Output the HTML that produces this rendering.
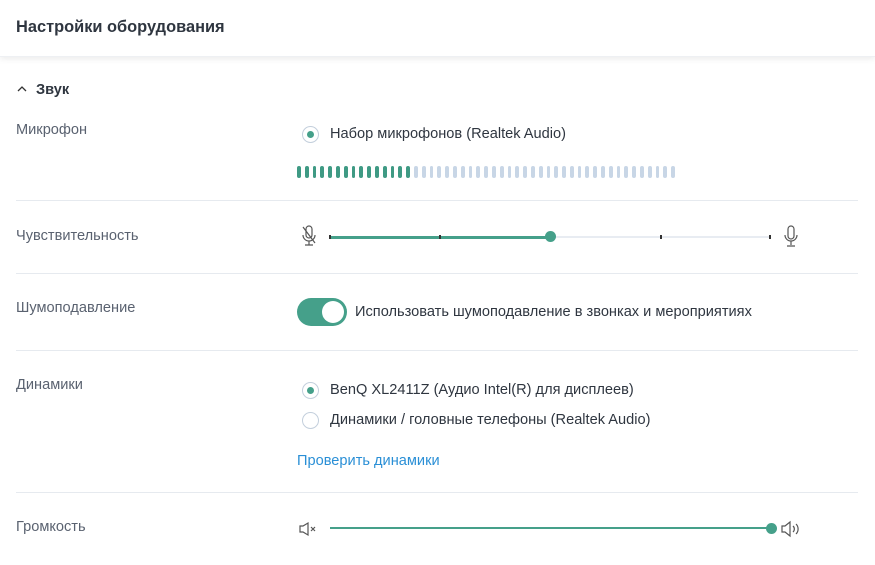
<!DOCTYPE html>
<html><head><meta charset="utf-8"><style>
*{margin:0;padding:0;box-sizing:border-box}
body{width:875px;height:565px;background:#fff;font-family:"Liberation Sans","DejaVu Sans",sans-serif;color:#333;position:relative;overflow:hidden}
.hdr{position:absolute;left:0;top:0;width:875px;height:57px;background:#fff;box-shadow:0 2px 6px rgba(0,0,0,.08);border-bottom:1px solid #eef0f3}
.hdr span{position:absolute;left:16px;top:18px;font-size:16.4px;font-weight:bold;color:#2f3640}
.a{position:absolute;white-space:nowrap}
.lbl{font-size:14.6px;color:#5a6270}
.t{font-size:14.6px;color:#2f3640}
.sep{position:absolute;left:16px;width:842px;height:1px;background:#e6eaef}
.radio{position:absolute;width:17px;height:17px;border-radius:50%;border:1px solid #c3cfdc;background:#fff}
.radio.on::after{content:"";position:absolute;left:4px;top:4px;width:7px;height:7px;border-radius:50%;background:#45a08a}
.bars{position:absolute;left:297px;top:166px;display:flex;gap:4px}
.bars i{display:block;width:3.8px;height:12px;border-radius:2px;background:#c8d6e6}
.bars i.g{background:#3f9a84}
.track{position:absolute;height:2px;background:#e8ecf2}
.fill{position:absolute;height:3px;background:#45a08a}
.dot{position:absolute;width:11px;height:11px;border-radius:50%;background:#45a08a}
.tick{position:absolute;width:2px;height:4px;background:#333}
</style></head><body>
<div class="hdr"><span>Настройки оборудования</span></div>
<div class="a" style="left:17px;top:82px;font-size:14.6px;font-weight:bold;color:#2f3640"><svg width="10" height="8" style="margin-right:9px;vertical-align:1px"><path d="M1 6L5 2L9 6" fill="none" stroke="#333" stroke-width="1.3"/></svg>Звук</div>

<div class="a lbl" style="left:16px;top:122px">Микрофон</div>
<div class="radio on" style="left:302px;top:126px"></div>
<div class="a t" style="left:330px;top:126px">Набор микрофонов (Realtek Audio)</div>
<div class="bars">
<i class="g"></i><i class="g"></i><i class="g"></i><i class="g"></i><i class="g"></i><i class="g"></i><i class="g"></i><i class="g"></i><i class="g"></i><i class="g"></i><i class="g"></i><i class="g"></i><i class="g"></i><i class="g"></i><i class="g"></i>
<i></i><i></i><i></i><i></i><i></i><i></i><i></i><i></i><i></i><i></i><i></i><i></i><i></i><i></i><i></i><i></i><i></i><i></i><i></i><i></i><i></i><i></i><i></i><i></i><i></i><i></i><i></i><i></i><i></i><i></i><i></i><i></i><i></i><i></i>
</div>
<div class="sep" style="top:200px"></div>

<div class="a lbl" style="left:16px;top:228px">Чувствительность</div>
<svg class="a" style="left:301px;top:225px" width="16" height="24" viewBox="0 0 16 24"><rect x="5" y="1" width="6" height="12" rx="3" fill="none" stroke="#555" stroke-width="1.2"/><path d="M2 10a6 6 0 0 0 12 0M8 16v4M4 20h8M2 2l12 16" fill="none" stroke="#555" stroke-width="1.2"/></svg>
<div class="track" style="left:330px;top:236px;width:440px"></div>
<div class="fill" style="left:330px;top:235.5px;width:220px"></div>
<div class="tick" style="left:329px;top:235px"></div><div class="tick" style="left:439px;top:235px"></div><div class="tick" style="left:660px;top:235px"></div><div class="tick" style="left:769px;top:235px"></div>
<div class="dot" style="left:545px;top:231px"></div>
<svg class="a" style="left:783px;top:225px" width="16" height="24" viewBox="0 0 16 24"><rect x="5" y="1" width="6" height="13" rx="3" fill="none" stroke="#555" stroke-width="1.2"/><path d="M2 10a6 6 0 0 0 12 0M8 16v4M4 21h8" fill="none" stroke="#555" stroke-width="1.2"/></svg>
<div class="sep" style="top:273px"></div>

<div class="a lbl" style="left:16px;top:300px">Шумоподавление</div>
<div class="a" style="left:297px;top:298px;width:50px;height:28px;border-radius:14px;background:#45a08a"><div style="position:absolute;right:3px;top:3px;width:22px;height:22px;border-radius:50%;background:#fff"></div></div>
<div class="a t" style="left:355px;top:304px">Использовать шумоподавление в звонках и мероприятиях</div>
<div class="sep" style="top:350px"></div>

<div class="a lbl" style="left:16px;top:377px">Динамики</div>
<div class="radio on" style="left:302px;top:382px"></div>
<div class="a t" style="left:330px;top:382px">BenQ XL2411Z (Аудио Intel(R) для дисплеев)</div>
<div class="radio" style="left:302px;top:412px"></div>
<div class="a t" style="left:330px;top:412px">Динамики / головные телефоны (Realtek Audio)</div>
<div class="a" style="left:297px;top:453px;font-size:14.6px;color:#2a8fd6">Проверить динамики</div>
<div class="sep" style="top:492px"></div>

<div class="a lbl" style="left:16px;top:519px">Громкость</div>
<svg class="a" style="left:299px;top:521px" width="20" height="16" viewBox="0 0 20 16"><path d="M1 5h3l5-3v12l-5-3H1z" fill="none" stroke="#555" stroke-width="1.2"/><path d="M12 6l4 4M16 6l-4 4" stroke="#555" stroke-width="1.2"/></svg>
<div class="fill" style="left:330px;top:527px;width:442px;height:2px"></div>
<div class="dot" style="left:766px;top:523px"></div>
<svg class="a" style="left:781px;top:520px" width="22" height="18" viewBox="0 0 22 18"><path d="M1 6h3l5-4v14l-5-4H1z" fill="none" stroke="#555" stroke-width="1.2"/><path d="M12 6a4 4 0 0 1 0 6M15 4a7 7 0 0 1 0 10" fill="none" stroke="#555" stroke-width="1.2"/></svg>
</body></html>
